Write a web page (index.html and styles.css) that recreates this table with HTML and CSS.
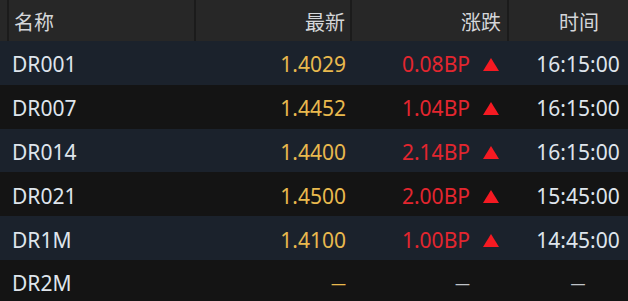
FILE: index.html
```html
<!DOCTYPE html>
<html lang="zh">
<head>
<meta charset="utf-8">
<title>行情</title>
<link rel="stylesheet" href="styles.css">
</head>
<body>
<div class="quote-table">
  <div class="head">
    <div class="hcell name">名称</div>
    <div class="hcell price">最新</div>
    <div class="hcell change">涨跌</div>
    <div class="hcell time">时间</div>
  </div>
  <div class="row odd">
    <div class="cell name">DR001</div>
    <div class="cell price">1.4029</div>
    <div class="cell change"><span class="bp">0.08BP</span><span class="tri"></span></div>
    <div class="cell time">16:15:00</div>
  </div>
  <div class="row even">
    <div class="cell name">DR007</div>
    <div class="cell price">1.4452</div>
    <div class="cell change"><span class="bp">1.04BP</span><span class="tri"></span></div>
    <div class="cell time">16:15:00</div>
  </div>
  <div class="row odd">
    <div class="cell name">DR014</div>
    <div class="cell price">1.4400</div>
    <div class="cell change"><span class="bp">2.14BP</span><span class="tri"></span></div>
    <div class="cell time">16:15:00</div>
  </div>
  <div class="row even">
    <div class="cell name">DR021</div>
    <div class="cell price">1.4500</div>
    <div class="cell change"><span class="bp">2.00BP</span><span class="tri"></span></div>
    <div class="cell time">15:45:00</div>
  </div>
  <div class="row odd">
    <div class="cell name">DR1M</div>
    <div class="cell price">1.4100</div>
    <div class="cell change"><span class="bp">1.00BP</span><span class="tri"></span></div>
    <div class="cell time">14:45:00</div>
  </div>
  <div class="row even">
    <div class="cell name">DR2M</div>
    <div class="cell price"><span class="dash">—</span></div>
    <div class="cell change"><span class="dash muted">—</span><span class="tri hidden"></span></div>
    <div class="cell time"><span class="dash muted">—</span></div>
  </div>
</div>
</body>
</html>
```
FILE: styles.css
```css
html, body {
  margin: 0;
  padding: 0;
  background: #141414;
}
body {
  width: 628px;
  height: 301px;
  overflow: hidden;
  font-family: "Noto Sans", "Noto Sans CJK SC", sans-serif;
  font-size: 21px;
}
.quote-table {
  display: flex;
  flex-direction: column;
}
.head {
  display: grid;
  grid-template-columns: 187px 156px 157px 1fr;
  height: 41px;
  padding-left: 7px;
  background: #272727;
}
.hcell {
  display: flex;
  align-items: center;
  padding-top: 2px;
  border-left: 2px solid #1b1b1b;
  color: #d4d6d9;
  font-size: 20px;
}
.row {
  display: grid;
  grid-template-columns: 194px 156px 157px 1fr;
  height: 43.8px;
}
.row.odd { background: #1b222c; }
.row.even { background: #141414; }
.cell {
  display: flex;
  align-items: center;
  padding-top: 3px;
  color: #dfe5ec;
}
.name { padding-left: 12px; }
.hcell.name { padding-left: 5px; }
.price { justify-content: flex-end; padding-right: 4px; color: #e9b94e; }
.hcell.price { padding-right: 5px; color: #d4d6d9; }
.change { justify-content: flex-end; padding-right: 8px; }
.hcell.change { padding-right: 6px; }
.bp { color: #e3262f; }
.tri {
  width: 0;
  height: 0;
  margin-left: 13px;
  margin-top: 1px;
  border-left: 8.5px solid transparent;
  border-right: 8.5px solid transparent;
  border-bottom: 13px solid #f51a22;
}
.tri.hidden { visibility: hidden; }
.time { justify-content: center; padding-left: 21px; }
.dash {
  font-size: 15px;
  color: #e9b94e;
}
.dash.muted { color: #bfc3c8; }
```
